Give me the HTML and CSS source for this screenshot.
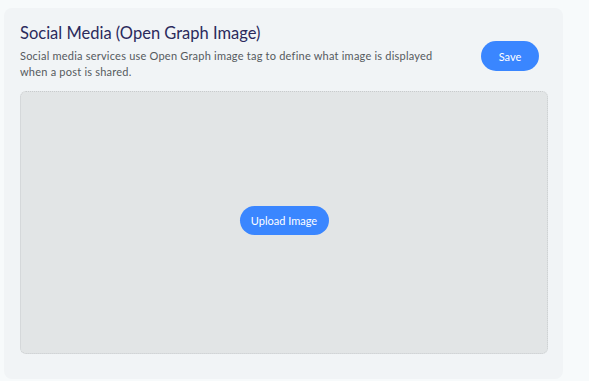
FILE: index.html
```html
<!DOCTYPE html>
<html lang="en">
<head>
  <meta charset="UTF-8">
  <meta name="viewport" content="width=device-width, initial-scale=1.0">
  <title>Social Media</title>
  <link rel="stylesheet" href="styles.css">
</head>
<body>
  <section class="card">
    <div class="card-head">
      <div class="card-text">
        <h2>Social Media (Open Graph Image)</h2>
        <p>Social media services use Open Graph image tag to define what image is displayed when a post is shared.</p>
      </div>
      <button class="btn save">Save</button>
    </div>

    <div class="dropzone">
      <button class="btn upload">Upload Image</button>
    </div>
  </section>
</body>
</html>
```

FILE: styles.css
```css
body {
  margin: 0;
  padding: 8px 26px 2px 4px;
  background: #f7fafb;
  font-family: 'Lato', 'Open Sans', sans-serif;
}

.card {
  background: #f1f4f6;
  border-radius: 8px;
  padding: 14px 15px 24px 16px;
  height: 333px;
}

.card-head {
  display: flex;
  justify-content: space-between;
  align-items: flex-start;
}

.card-text h2 {
  margin: 0;
  font-size: 16.5px;
  font-weight: 400;
  color: #2b2a5c;
  line-height: 22px;
}

.card-text p {
  margin: 4px 0 0;
  width: 436px;
  font-size: 11px;
  letter-spacing: 0.22px;
  line-height: 16px;
  color: #555a5e;
}

.btn {
  border: none;
  background: #3a86ff;
  color: #fff;
  font-family: inherit;
  font-size: 11px;
  border-radius: 16px;
  cursor: pointer;
}

.save {
  width: 58px;
  height: 30px;
  margin-top: 19px;
  margin-right: 9px;
}

.dropzone {
  margin-top: 11px;
  height: 261px;
  background: #e2e5e6;
  border: 1px dotted #c8cbcd;
  border-radius: 6px;
  display: flex;
  align-items: center;
  justify-content: center;
}

.upload {
  width: 89px;
  height: 29px;
  margin-top: -4px;
}
```
